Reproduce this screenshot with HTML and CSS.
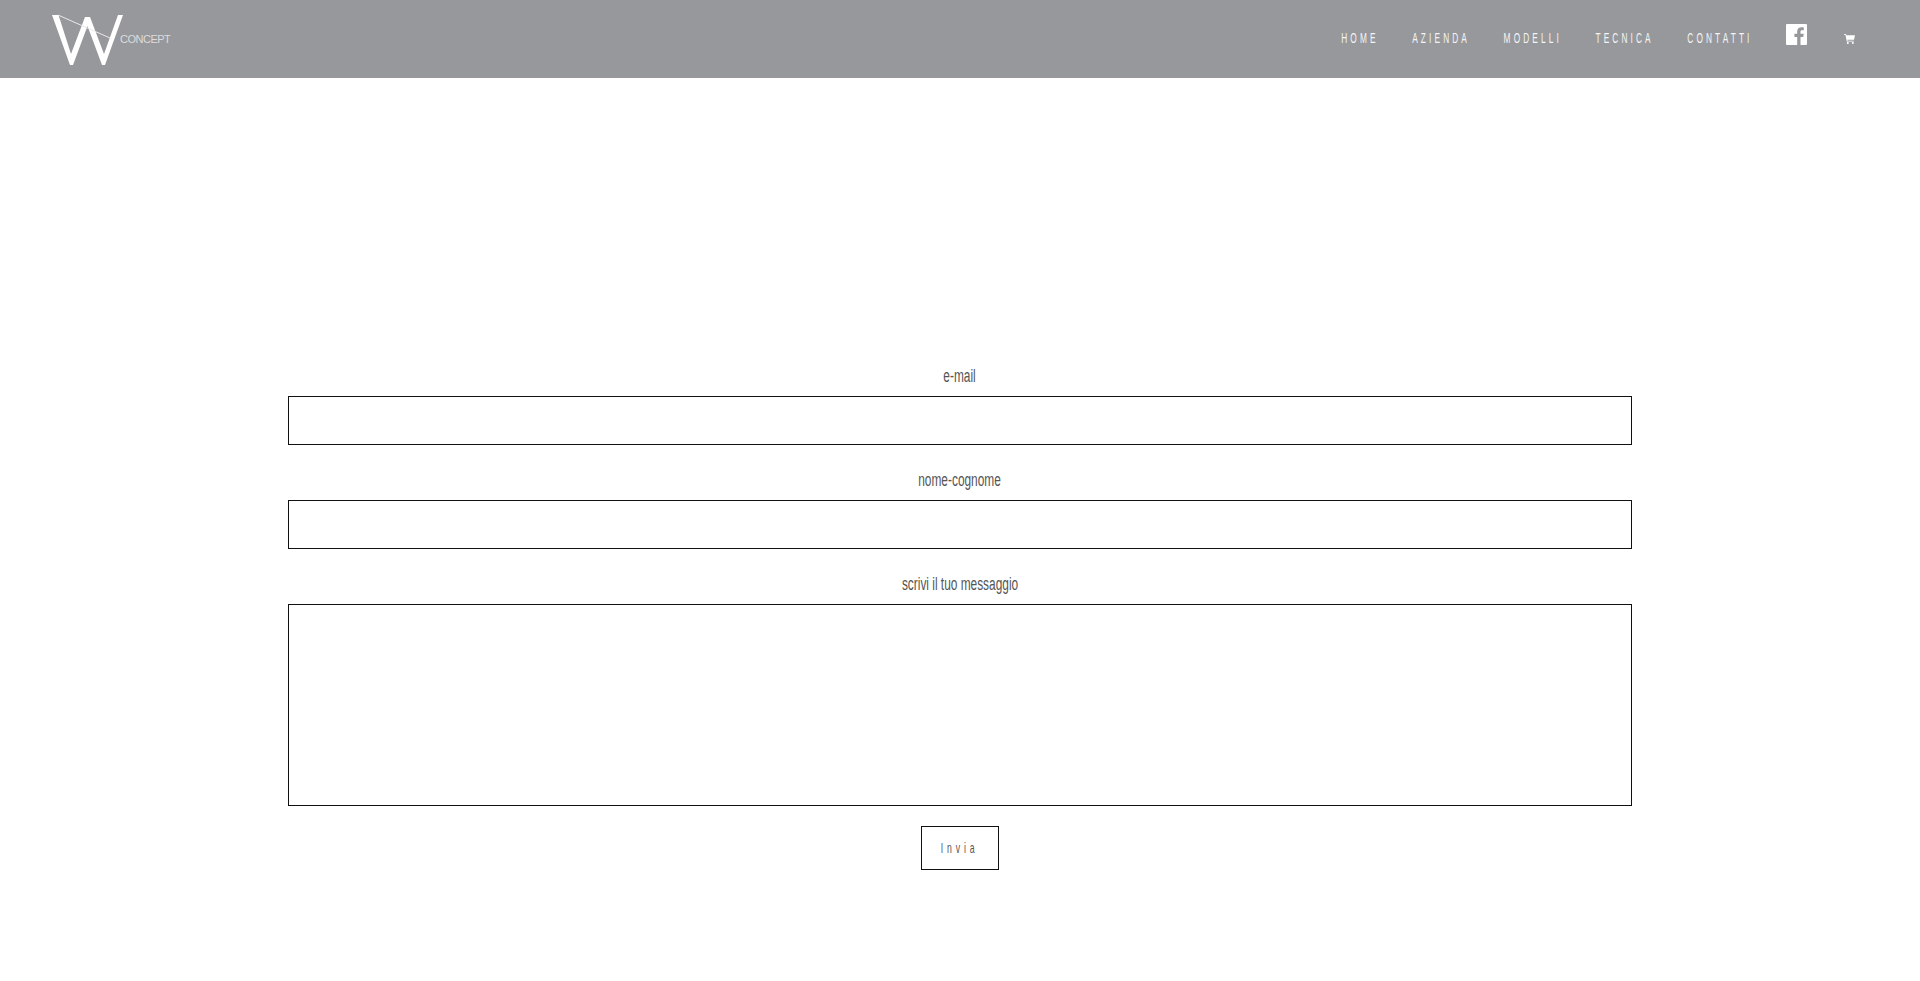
FILE: index.html
```html
<!DOCTYPE html>
<html lang="it">
<head>
<meta charset="utf-8">
<title>Contatti - W Concept</title>
<link rel="stylesheet" href="styles.css">
</head>
<body>
<header class="topbar">
  <a class="logo" href="#">
    <svg class="logo-mark" width="72" height="52" viewBox="0 0 72 52">
      <path class="logo-w" d="M0 1 L6.500 1 L19 40 L33 3 L38 3 L52 40 L66 1 L71 1 L53 51 L50 51 L35.500 12 L21 51 L18 51 Z"/>
      <path class="logo-line" d="M6 1 L58 24"/>
    </svg>
    <span class="logo-text">CONCEPT</span>
  </a>
  <nav class="menu">
    <div class="menu-text">
      <a href="#">HOME</a>
      <a href="#">AZIENDA</a>
      <a href="#">MODELLI</a>
      <a href="#">TECNICA</a>
      <a href="#">CONTATTI</a>
    </div>
    <a href="#" class="icon-link fb">
      <svg width="21" height="21" viewBox="0 0 21 21"><path class="white" d="M1 0 H20 a1 1 0 0 1 1 1 V20 a1 1 0 0 1 -1 1 H14.500 V13 H17.300 L17.700 9.800 H14.500 V7.800 C14.500 6.900 14.800 6.300 16 6.300 H17.800 V3.400 C17.400 3.300 16.500 3.300 15.500 3.300 C13 3.300 11.200 4.800 11.200 7.500 V9.800 H8.400 V13 H11.200 V21 H1 a1 1 0 0 1 -1 -1 V1 a1 1 0 0 1 1 -1 Z"/></svg>
    </a>
    <a href="#" class="icon-link cart">
      <svg width="11" height="10" viewBox="0 0 11 10"><path class="white" d="M0 0 H2 L2.400 1.200 H11 L10 5.800 H3.400 L3.600 6.800 H9.800 V7.600 H2.800 L1.400 0.800 H0 Z"/><circle class="white" cx="3.800" cy="9" r="1"/><circle class="white" cx="8.800" cy="9" r="1"/></svg>
    </a>
  </nav>
</header>
<main class="content">
  <form class="contact">
    <label class="field"><span class="lbl"><span class="squeeze">e-mail</span></span><input type="text" class="box"></label>
    <label class="field"><span class="lbl"><span class="squeeze">nome-cognome</span></span><input type="text" class="box"></label>
    <label class="field field-last"><span class="lbl"><span class="squeeze">scrivi il tuo messaggio</span></span><textarea class="box area"></textarea></label>
    <button type="button" class="send"><span class="send-text">Invia</span></button>
  </form>
</main>
</body>
</html>
```
FILE: styles.css
```css
* { box-sizing: border-box; }
html, body { margin: 0; height: 100%; background: #fff; overflow: hidden; }
body { font-family: "Liberation Sans", sans-serif; }
a { text-decoration: none; color: inherit; }

.topbar {
  height: 78px;
  background: #97989b;
  display: flex;
  justify-content: space-between;
  align-items: center;
  padding: 0 65px 0 52px;
}
.logo { display: flex; align-items: center; color: #dcdcde; }
.logo-mark { display: block; margin-top: 2px; }
.logo-w { fill: #fff; }
.logo-line { stroke: #e8e8e9; stroke-width: 1; fill: none; }
.logo-text {
  font-size: 11px;
  letter-spacing: -0.500px;
  margin-left: -4px;
}
.menu { display: flex; align-items: center; gap: 33px; margin-top: -2px; }
.menu-text {
  display: flex;
  gap: 59px;
  color: #f4f4f5;
  font-size: 14.500px;
  letter-spacing: 5.500px;
  transform: scaleX(0.57);
  transform-origin: right center;
}
.icon-link { display: flex; }
.fb { margin-top: -7px; }
.cart { margin-top: 2px; margin-left: 4px; }
.white { fill: #fff; }

.content { padding-top: 286px; }
.contact {
  width: 1344px;
  margin-left: 288px;
  display: flex;
  flex-direction: column;
  align-items: center;
}
.field { display: block; width: 100%; text-align: center; margin-bottom: 23px; }
.field-last { margin-bottom: 20px; }
.lbl {
  display: block;
  height: 32px;
  line-height: 24px;
  font-size: 18px;
  color: #555;
}
.squeeze { display: inline-block; transform: scaleX(0.66); }
.box {
  display: block;
  width: 100%;
  height: 49px;
  border: 1px solid #111;
  background: #fff;
  border-radius: 0;
  outline: none;
  padding: 0;
  margin: 0;
  resize: none;
}
.area { height: 202px; }
.send {
  width: 78px;
  height: 44px;
  background: #fff;
  border: 1px solid #111;
  border-radius: 0;
  padding: 0;
  font-family: inherit;
  font-size: 14.500px;
  letter-spacing: 6.500px;
  color: #555;
}
.send-text { display: inline-block; transform: scaleX(0.6); }
```
